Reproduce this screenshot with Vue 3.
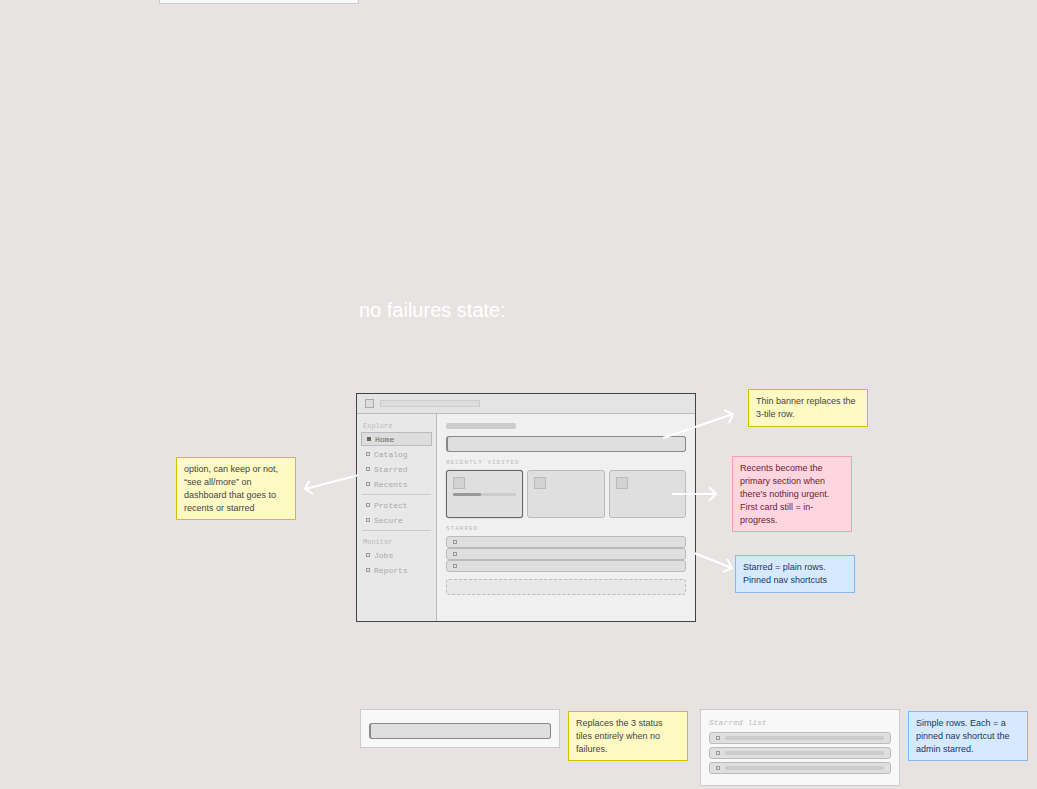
<script setup>
const navGroups = [
  { label: 'Explore', items: ['Home', 'Catalog', 'Starred', 'Recents'] },
  { label: '', items: ['Protect', 'Secure'] },
  { label: 'Monitor', items: ['Jobs', 'Reports'] },
]

const notes = [
  { id: 'option', tone: 'yellow', lines: ['option, can keep or not,', '“see all/more” on', 'dashboard that goes to', 'recents or starred'] },
  { id: 'thin', tone: 'yellow', lines: ['Thin banner replaces the', '3-tile row.'] },
  { id: 'recents', tone: 'pink', lines: ['Recents become the', 'primary section when', "there's nothing urgent.", 'First card still = in-', 'progress.'] },
  { id: 'starred', tone: 'blue', lines: ['Starred = plain rows.', 'Pinned nav shortcuts'] },
  { id: 'replaces', tone: 'yellow', lines: ['Replaces the 3 status', 'tiles entirely when no', 'failures.'] },
  { id: 'simple', tone: 'blue', lines: ['Simple rows. Each = a', 'pinned nav shortcut the', 'admin starred.'] },
]

const arrows = [
  'M663 438 L733 414 M724 410 L733 414 L729 423',
  'M672 494 L716 494 M709 487 L716 494 L709 501',
  'M694 553 L732 568 M727 559 L732 568 L723 572',
  'M359 475 L305 489 M309 481 L305 489 L313 494',
]
</script>

<template>
  <main class="canvas">
    <section class="panel panel-top"></section>

    <h1 class="heading">no failures state:</h1>

    <section class="window">
      <header class="topbar">
        <span class="logo"></span>
        <span class="search"></span>
      </header>
      <div class="body">
        <nav class="sidebar">
          <div v-for="(group, g) in navGroups" :key="g" class="group">
            <div v-if="group.label" class="group-label">{{ group.label }}</div>
            <a
              v-for="item in group.items"
              :key="item"
              href="#"
              class="nav-item"
              :class="{ active: item === 'Home' }"
            ><span class="dot"></span><span class="nav-text">{{ item }}</span></a>
          </div>
        </nav>
        <div class="content">
          <div class="title-bar"></div>
          <div class="banner"></div>
          <h2 class="section-label">RECENTLY VISITED</h2>
          <div class="cards">
            <div v-for="n in 3" :key="n" class="card" :class="{ current: n === 1 }">
              <div class="thumb"></div>
              <div v-if="n === 1" class="track"><div class="fill"></div></div>
            </div>
          </div>
          <h2 class="section-label">STARRED</h2>
          <div class="rows">
            <div v-for="n in 3" :key="n" class="row"><span class="dot"></span></div>
          </div>
          <div class="placeholder"></div>
        </div>
      </div>
    </section>

    <section class="panel panel-banner">
      <div class="banner"></div>
    </section>

    <section class="panel panel-list">
      <h2 class="list-title">Starred list</h2>
      <div class="rows spaced">
        <div v-for="n in 3" :key="n" class="row">
          <span class="dot"></span><span class="line"></span>
        </div>
      </div>
    </section>

    <aside v-for="note in notes" :key="note.id" class="note" :class="[note.tone, 'note-' + note.id]">
      <div v-for="line in note.lines" :key="line">{{ line }}</div>
    </aside>

    <svg class="arrows" aria-hidden="true">
      <path v-for="d in arrows" :key="d" :d="d" />
    </svg>
  </main>
</template>

<style>
body {
  margin: 0;
  background: #e7e3e2;
}
</style>

<style scoped>
.canvas,
.canvas * {
  box-sizing: border-box;
}
.canvas {
  position: relative;
  min-height: 100vh;
  overflow: hidden;
  background: #e7e3e2;
  font-family: "Liberation Sans", Arial, sans-serif;
}
.heading {
  position: absolute;
  left: 359px;
  top: 299px;
  margin: 0;
  font-size: 20px;
  line-height: 23px;
  font-weight: 400;
  color: #fff;
  white-space: nowrap;
}

/* Wireframe window */
.window {
  position: absolute;
  left: 356px;
  top: 393px;
  width: 340px;
  border: 1px solid #444;
  background: #f0f0f0;
  font-family: "Courier New", "Liberation Mono", monospace;
}
.topbar {
  display: flex;
  align-items: center;
  gap: 6px;
  height: 20px;
  padding: 0 8px;
  background: #e4e4e4;
  border-bottom: 1px solid #bbb;
}
.logo {
  width: 9px;
  height: 9px;
  border: 1px solid #aaa;
  background: #ddd;
}
.search {
  width: 100px;
  height: 7px;
  border: 1px solid #ccc;
  background: #ddd;
}
.body {
  display: flex;
}
.sidebar {
  width: 80px;
  padding: 4px;
  background: #e8e8e8;
  border-right: 1px solid #bbb;
}
.group {
  display: flex;
  flex-direction: column;
  gap: 1px;
}
.group + .group {
  position: relative;
  margin-top: 3px;
  padding-top: 4px;
}
.group + .group::before {
  content: "";
  position: absolute;
  top: 0;
  left: 1px;
  right: 1px;
  height: 1px;
  background: #ccc;
}
.group-label {
  margin-top: 3px;
  padding-left: 2px;
  font-size: 7px;
  line-height: 10px;
  color: #bbb;
}
.nav-item {
  display: flex;
  align-items: center;
  gap: 4px;
  height: 14px;
  padding-left: 5px;
  font-size: 8px;
  line-height: 10px;
  color: #aaa;
  text-decoration: none;
}
.nav-text {
  padding-top: 2px;
}
.nav-item.active {
  border: 1px solid #bbb;
  background: #ddd;
  color: #666;
}
.dot {
  flex: none;
  width: 4px;
  height: 4px;
  border: 1px solid #999;
}
.active .dot {
  border-color: #666;
  background: #666;
}
.content {
  flex: 1;
  padding: 9px 9px 26px;
}
.title-bar {
  width: 70px;
  height: 6px;
  margin-bottom: 7px;
  border-radius: 2px;
  background: #ccc;
}
.banner {
  height: 16px;
  border: 1px solid #888;
  border-left-width: 2px;
  border-radius: 3px;
  background: #dfdfdf;
}
.section-label {
  margin: 7px 0 3px;
  font-size: 6px;
  line-height: 8px;
  font-weight: 400;
  letter-spacing: 1px;
  color: #bbb;
}
.cards {
  display: grid;
  grid-template-columns: repeat(3, 1fr);
  gap: 4px;
}
.card {
  height: 48px;
  padding: 6px;
  border: 1px solid #bbb;
  border-radius: 3px;
  background: #dfdfdf;
}
.card.current {
  border-color: #666;
  box-shadow: 0 0 1px #666;
}
.thumb {
  width: 12px;
  height: 12px;
  border: 1px solid #bbb;
  background: #d2d2d2;
}
.track {
  height: 3px;
  margin-top: 4px;
  border-radius: 1px;
  background: #ccc;
}
.fill {
  width: 45%;
  height: 3px;
  border-radius: 1px;
  background: #999;
}
.rows {
  display: flex;
  flex-direction: column;
}
.rows.spaced {
  gap: 3px;
}
.row {
  display: flex;
  align-items: center;
  gap: 5px;
  height: 12px;
  padding: 0 6px;
  border: 1px solid #bbb;
  border-radius: 3px;
  background: #dfdfdf;
}
.line {
  flex: 1;
  height: 4px;
  border-radius: 2px;
  background: #ccc;
}
.placeholder {
  height: 16px;
  margin-top: 7px;
  border: 1px dashed #bbb;
  border-radius: 3px;
  background: #e8e8e8;
}

/* Component panels */
.panel {
  position: absolute;
  width: 200px;
  border: 1px solid #ccc;
  background: #f8f8f8;
}
.panel-top {
  left: 159px;
  top: 0;
  height: 4px;
  border-top: 0;
}
.panel-banner {
  left: 360px;
  top: 709px;
  padding: 13px 8px 8px;
}
.panel-list {
  left: 700px;
  top: 709px;
  padding: 8px 8px 11px;
  font-family: "Courier New", "Liberation Mono", monospace;
}
.list-title {
  margin: 0 0 4px;
  font-size: 8px;
  line-height: 10px;
  font-weight: 400;
  font-style: italic;
  color: #bbb;
}

/* Sticky notes */
.note {
  position: absolute;
  width: 120px;
  min-height: 38px;
  padding: 5px 7px 4px;
  border: 1px solid;
  font-size: 9px;
  line-height: 13px;
  white-space: nowrap;
}
.yellow {
  border-color: #d4c200;
  background: #fff9c4;
  color: #444;
}
.pink {
  border-color: #f4a0b5;
  background: #ffd6e0;
  color: #6b1a33;
}
.blue {
  border-color: #80b8f0;
  background: #d6eaff;
  color: #1a3560;
}
.note-option { left: 176px; top: 457px; }
.note-thin { left: 748px; top: 389px; }
.note-recents { left: 732px; top: 456px; }
.note-starred { left: 735px; top: 555px; }
.note-replaces { left: 568px; top: 711px; }
.note-simple { left: 908px; top: 711px; }

.arrows {
  position: absolute;
  inset: 0;
  width: 100%;
  height: 100%;
  pointer-events: none;
}
.arrows path {
  fill: none;
  stroke: #fff;
  stroke-width: 2;
}
</style>
